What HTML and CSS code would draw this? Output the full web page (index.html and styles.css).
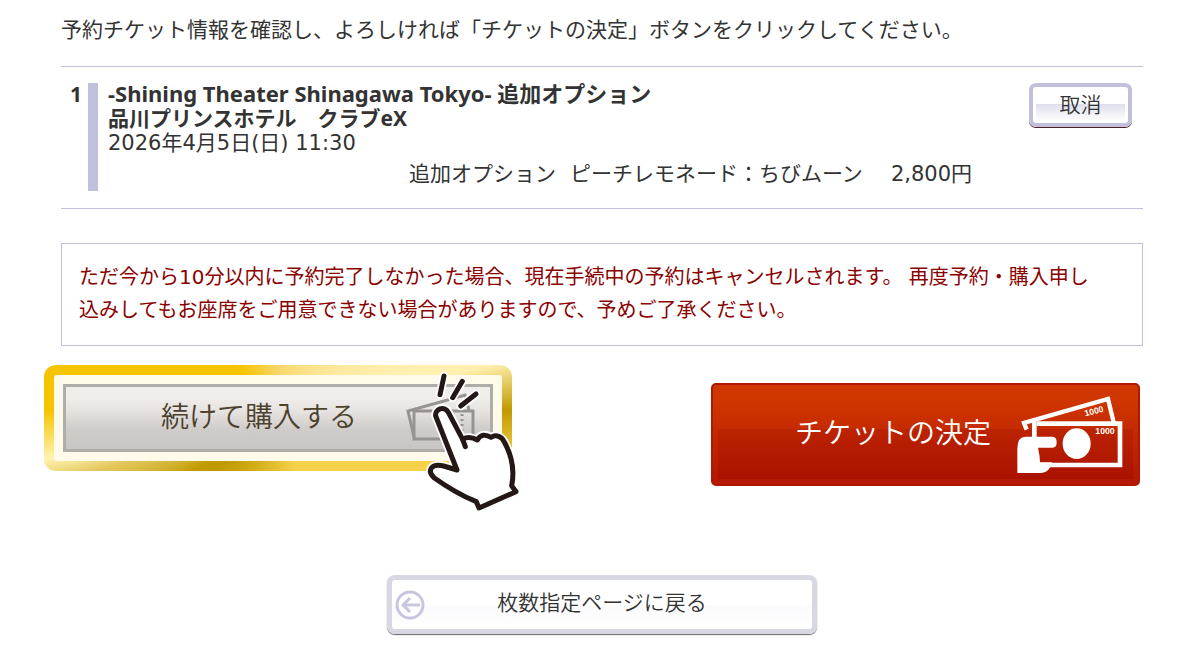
FILE: index.html
```html
<!DOCTYPE html>
<html lang="ja">
<head>
    <meta charset="UTF-8">
    <meta name="viewport" content="width=device-width, initial-scale=1.0">
    <title>予約チケットの確認</title>
    <link rel="stylesheet" href="styles.css">
</head>
<body>

<main class="container">
    <p class="lead">予約チケット情報を確認し、よろしければ「チケットの決定」ボタンをクリックしてください。</p>

    <!-- 予約内容 -->
    <section class="ticket">
        <div class="ticket-number">1</div>
        <div class="ticket-body">
            <h1 class="ticket-title">-Shining Theater Shinagawa Tokyo- 追加オプション</h1>
            <p class="ticket-place">品川プリンスホテル　クラブeX</p>
            <p class="ticket-date">2026年4月5日(日) 11:30</p>
            <div class="ticket-item">
                <span>追加オプション</span>
                <span>ピーチレモネード：ちびムーン</span>
                <span class="price">2,800円</span>
            </div>
        </div>
        <button type="button" class="cancel">取消</button>
    </section>

    <p class="notice">ただ今から10分以内に予約完了しなかった場合、現在手続中の予約はキャンセルされます。 再度予約・購入申し込みしてもお座席をご用意できない場合がありますので、予めご了承ください。</p>

    <div class="actions">
        <div class="highlight">
            <button type="button" class="continue">
                <span>続けて購入する</span>
                <svg class="tickets" viewBox="0 0 72 52" aria-hidden="true">
                    <g fill="none" stroke="#979391" stroke-width="3">
                        <path d="M9 45 3 19 60 3 64 18"/>
                        <path d="M9 19h59v28H9z"/>
                        <path d="M57 22v22" stroke-dasharray="2 3"/>
                    </g>
                </svg>
            </button>
            <!-- クリックする手 -->
            <svg class="hand" viewBox="0 0 540 480" aria-hidden="true">
                <g stroke="#fff" stroke-width="26" stroke-linecap="round" stroke-linejoin="round" fill="none">
                    <path d="M252 48 240 104M307 64 278 113M348 102 302 138"/>
                    <path d="M227 168C223 149 253 134 265 157L308 238C321 230 337 232 352 240C361 223 377 222 393 232C409 222 425 230 433 246C456 288 464 333 455 377L468 395 357 444 349 425C305 407 260 380 222 353C201 333 212 309 251 318L291 330Z"/>
                </g>
                <g stroke="#231815" stroke-width="15" stroke-linecap="round" stroke-linejoin="round" fill="none">
                    <path d="M252 48 240 104M307 64 278 113M348 102 302 138"/>
                    <path fill="#fff" d="M227 168C223 149 253 134 265 157L308 238C321 230 337 232 352 240C361 223 377 222 393 232C409 222 425 230 433 246C456 288 464 333 455 377L468 395 357 444 349 425C305 407 260 380 222 353C201 333 212 309 251 318L291 330Z"/>
                    <path d="M308 238 316 260"/>
                </g>
            </svg>
        </div>

        <button type="button" class="decide">
            <span>チケットの決定</span>
            <svg class="bills" viewBox="0 0 324 240" aria-hidden="true">
                <path d="M32 104 24 84 276 12 294 86" fill="none" stroke="#fff" stroke-width="13"/>
                <path d="M62 86h250v124H72" fill="none" stroke="#fff" stroke-width="14"/>
                <path d="M55 80v58" stroke="#fff" stroke-width="14"/>
                <ellipse cx="182" cy="146" rx="42" ry="46" fill="#fff"/>
                <path d="M4 234V160Q5 125 28 125H110Q122 126 122 142Q122 158 110 158H66Q72 184 72 202H108Q100 234 76 234Z" fill="#fff"/>
                <text x="238" y="116" class="bill-text">1000</text>
                <text x="208" y="64" class="bill-text" transform="rotate(-14 208 64)">1000</text>
            </svg>
        </button>
    </div>

    <button type="button" class="back">
        <svg class="back-icon" viewBox="0 0 30 30" aria-hidden="true">
            <circle cx="15" cy="15" r="13" fill="#fff" stroke="#c8c6df" stroke-width="3"/>
            <path d="M25 15H8M15 8 8 15 15 22" fill="none" stroke="#c8c6df" stroke-width="3"/>
        </svg>
        <span>枚数指定ページに戻る</span>
    </button>
</main>

</body>
</html>
```

FILE: styles.css
```css
* {
    box-sizing: border-box;
}

body {
    margin: 0;
    background-color: #ffffff;
    color: #333333;
    font-family: "DejaVu Sans", "Noto Sans CJK JP", sans-serif;
    font-size: 21px;
    line-height: 25px;
}

button {
    padding: 0;
    color: #333333;
    font-family: "Noto Sans CJK JP", sans-serif;
    font-weight: 350;
    cursor: pointer;
}

p, h1 {
    margin: 0;
}

.container {
    padding: 18px 59px 22px 61px;
}

.lead {
    margin-bottom: 23px;
}

.ticket {
    display: flex;
    align-items: flex-start;
    padding: 16px 11px 17px 0;
    border-top: 1px solid #c0c0dc;
    border-bottom: 1px solid #c0c0dc;
}

.ticket-number {
    width: 27px;
    padding-right: 6px;
    font-family: "Noto Sans", sans-serif;
    font-weight: bold;
    line-height: 22px;
    text-align: right;
}

.ticket-body {
    flex: 1;
    min-height: 108px;
    padding-left: 10px;
    border-left: 10px solid #c0c0dc;
    margin-right: 57px;
}

.ticket-title, .ticket-place {
    font-family: "Noto Sans", "Noto Sans CJK JP", sans-serif;
    font-size: 21px;
    font-weight: bold;
}

.ticket-title {
    margin-top: -3px;
    font-size: 22px;
    line-height: 26px;
}

.ticket-item {
    display: flex;
    justify-content: flex-end;
    gap: 14px;
    margin-top: 6px;
}

.price {
    margin-left: 14px;
}

.cancel {
    width: 103px;
    height: 44px;
    padding-bottom: 5px;
    border: 4px solid #c0c0dc;
    border-radius: 7px;
    background: linear-gradient(#ffffff 46%, #dedeee 47%, #ffffff 95%);
    box-shadow: inset 0 0 0 3px #ffffff, 0 1px 0 #4a2020;
    font-size: 21px;
}

.notice {
    margin-top: 34px;
    padding: 17px 36px 18px 17px;
    border: 1px solid #c0c0dc;
    color: #8b0000;
    font-size: 20px;
    line-height: 33px;
}

.actions {
    display: flex;
    justify-content: space-between;
    align-items: flex-start;
    margin: 19px 3px 0 -17px;
}

.highlight {
    position: relative;
    width: 468px;
    padding: 10px;
    border-radius: 12px;
    background: conic-gradient(#f8d66a 0deg, #fff0b0 70deg, #fff0b0 76deg, #c09a00 88deg, #f5d24a 100deg, #f5d24a 160deg, #c09a00 230deg, #c09a00 238deg, #e3c75c 254deg, #fff3b0 260deg, #f5c400 272deg, #f5c400 320deg, #f8d66a 360deg);
}

.continue {
    display: flex;
    align-items: center;
    width: 100%;
    height: 86px;
    padding-left: 98px;
    border: 9px solid #fffaea;
    border-radius: 3px;
    background: linear-gradient(#f0edeb 20%, #e4e1df 42%, #d0ccca 66%, #c8c4c1);
    box-shadow: inset 0 0 0 3px #b0aca8;
    color: #4b412c;
    font-size: 28px;
}

.continue span {
    margin-bottom: 6px;
}

.tickets {
    width: 72px;
    height: 52px;
    margin-left: 48px;
}

.hand {
    position: absolute;
    top: -5px;
    right: -28px;
    width: 180px;
    height: 160px;
    pointer-events: none;
}

.decide {
    display: flex;
    align-items: center;
    width: 429px;
    height: 103px;
    padding-left: 82px;
    margin-top: 18px;
    border: 2px solid #b01800;
    border-radius: 5px;
    background:
        linear-gradient(#bc2300, #aa1200) center 44px / 415px 50px no-repeat,
        linear-gradient(#d03600 15%, #c62c00 42%, #b51a00 90%);
    color: #ffffff;
    font-size: 28px;
}

.decide span {
    margin-bottom: 8px;
}

.bills {
    width: 108px;
    height: 80px;
    margin-left: 25px;
}

.bill-text {
    fill: #ffffff;
    font-family: "Liberation Sans", sans-serif;
    font-size: 26px;
    font-weight: bold;
}

.back {
    display: flex;
    align-items: center;
    width: 430px;
    height: 59px;
    padding-left: 3px;
    margin: 89px auto 0;
    border: 5px solid #d8d8e3;
    border-radius: 8px;
    background: linear-gradient(#ffffff 50%, #fbfbfd 52%, #ffffff);
    box-shadow: 0 1px 1px #666666;
    font-size: 21px;
}

.back-icon {
    width: 30px;
    height: 30px;
}

.back span {
    flex: 1;
    padding-right: 33px;
    margin-bottom: 8px;
    text-align: center;
}
```
